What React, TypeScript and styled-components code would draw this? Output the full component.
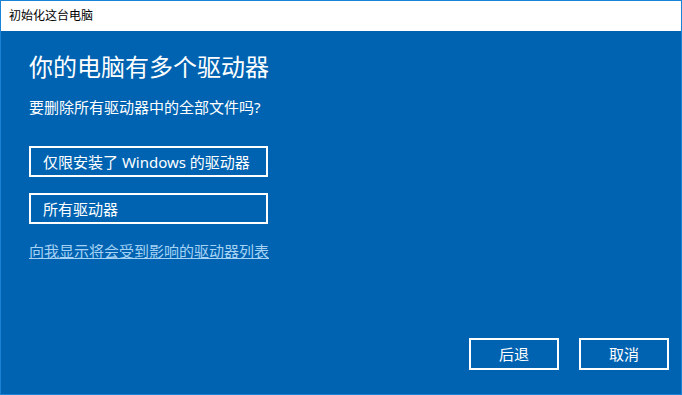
import { createGlobalStyle, styled } from 'styled-components';

const GlobalStyle = createGlobalStyle`
  html, body {
    margin: 0;
    padding: 0;
    background: #ffffff;
  }
  * {
    box-sizing: border-box;
  }
`;

const FONT = `"Noto Sans", "Noto Sans CJK SC", sans-serif`;

const App = () => {
  return (
    <>
      <GlobalStyle />
      <Window>
        <TitleBar>
          <Title>初始化这台电脑</Title>
        </TitleBar>
        <Body>
          <Heading>你的电脑有多个驱动器</Heading>
          <Question>要删除所有驱动器中的全部文件吗?</Question>
          <Options>
            <OptionButton>仅限安装了 Windows 的驱动器</OptionButton>
            <OptionButton>所有驱动器</OptionButton>
          </Options>
          <DriveLink href="#">向我显示将会受到影响的驱动器列表</DriveLink>
          <Footer>
            <FooterButton>后退</FooterButton>
            <FooterButton>取消</FooterButton>
          </Footer>
        </Body>
      </Window>
    </>
  );
};

const Window = styled.div`
  width: 682px;
  height: 395px;
  display: flex;
  flex-direction: column;
  border: 1px solid #1883d7;
  background: #0063b1;
  font-family: ${FONT};
`;

const TitleBar = styled.header`
  height: 30px;
  flex-shrink: 0;
  display: flex;
  align-items: center;
  padding-left: 8px;
  background: #ffffff;
`;

const Title = styled.span`
  font-size: 12px;
  line-height: 16px;
  color: #000000;
`;

const Body = styled.main`
  flex: 1;
  display: flex;
  flex-direction: column;
  align-items: flex-start;
  padding: 20px 12px 24px 28px;
  color: #ffffff;
`;

const Heading = styled.h1`
  margin: 0;
  font-size: 24px;
  font-weight: 400;
  line-height: 32px;
`;

const Question = styled.p`
  margin: 14px 0 0;
  font-size: 15px;
  line-height: 20px;
`;

const Options = styled.div`
  display: flex;
  flex-direction: column;
  gap: 16px;
  margin-top: 29px;
`;

const OptionButton = styled.button`
  width: 239px;
  height: 31px;
  padding: 0 0 0 12px;
  border: 2px solid #ffffff;
  background: transparent;
  color: #ffffff;
  font-family: ${FONT};
  font-size: 15px;
  line-height: 20px;
  text-align: left;
  cursor: pointer;
`;

const DriveLink = styled.a`
  margin-top: 17px;
  font-size: 15px;
  line-height: 20px;
  color: #a6d2f4;
  text-decoration: underline;
`;

const Footer = styled.div`
  margin-top: auto;
  align-self: stretch;
  display: flex;
  justify-content: flex-end;
  gap: 20px;
`;

const FooterButton = styled.button`
  width: 90px;
  height: 32px;
  padding: 0;
  border: 2px solid #ffffff;
  background: transparent;
  color: #ffffff;
  font-family: ${FONT};
  font-size: 15px;
  line-height: 20px;
  cursor: pointer;
`;

export default App;
